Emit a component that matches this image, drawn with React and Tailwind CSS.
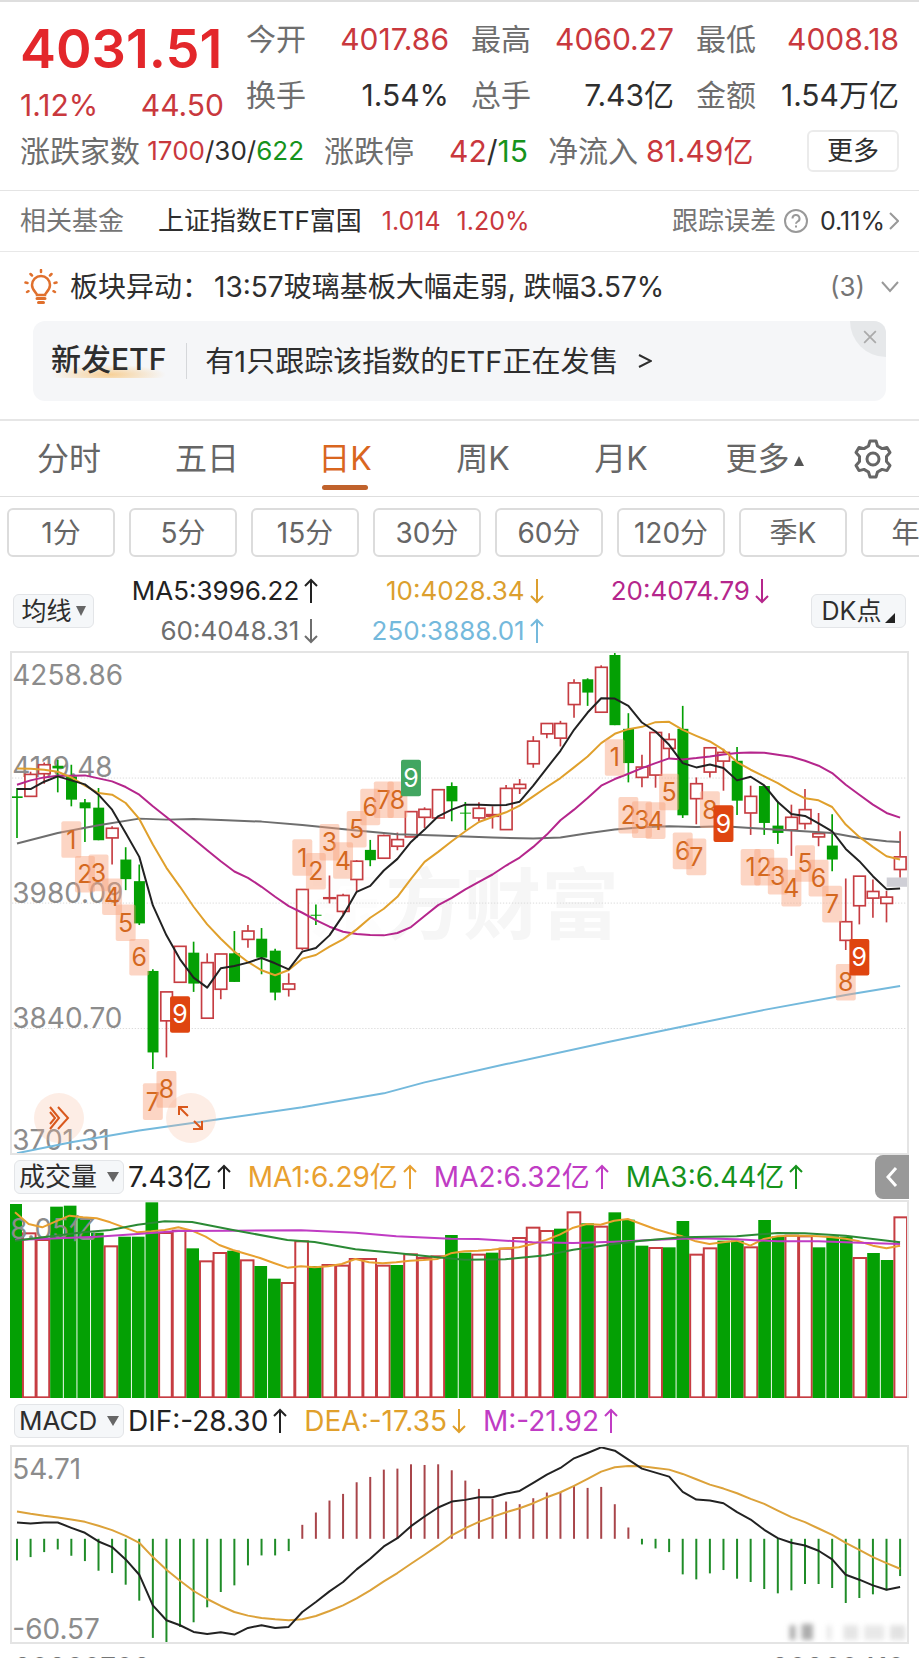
import React from 'react';

// Chart space: 3 units per pixel, one trading day every STEP units
const STEP = 40.85;
const CHART_W = 2691;
const dayX = (i) => 15 + i * STEP;

const RED = '#c63d42';
const GREEN = '#04a004';

// [day type, body top, body bottom, high, low]
const CANDLES = [
  ['g', 440, 445, 415, 565], ['r', 374, 440, 366, 440], ['r', 345, 372, 338, 402], ['g', 348, 356, 330, 428],
  ['g', 380, 450, 345, 470], ['g', 458, 476, 448, 577], ['g', 474, 572, 415, 572], ['r', 536, 565, 530, 645],
  ['g', 630, 689, 593, 722], ['g', 695, 822, 645, 827], ['g', 965, 1210, 960, 1260], ['r', 1028, 1115, 1028, 1225],
  ['r', 891, 999, 891, 999], ['g', 910, 1003, 877, 1028], ['r', 940, 1107, 912, 1107], ['r', 914, 1020, 914, 1050],
  ['g', 912, 998, 845, 998], ['r', 845, 870, 827, 895], ['g', 868, 925, 836, 975], ['g', 904, 1030, 898, 1053],
  ['r', 1004, 1020, 972, 1042], ['r', 720, 897, 720, 903], ['g', 796, 799, 765, 827], ['r', 745, 747, 678, 762],
  ['r', 738, 786, 733, 795], ['r', 635, 690, 632, 725], ['g', 601, 632, 571, 650], ['r', 558, 626, 555, 626],
  ['r', 570, 590, 549, 602], ['r', 486, 562, 486, 562], ['r', 479, 503, 473, 535], ['r', 420, 505, 420, 505],
  ['g', 409, 455, 398, 515], ['g', 489, 492, 457, 542], ['r', 476, 505, 458, 515], ['r', 495, 500, 470, 537],
  ['r', 416, 540, 406, 540], ['r', 404, 416, 388, 433], ['r', 274, 342, 259, 354], ['r', 221, 252, 221, 265],
  ['r', 221, 265, 213, 290], ['r', 99, 164, 88, 204], ['g', 88, 128, 85, 168], ['r', 52, 187, 46, 187],
  ['g', 15, 226, 9, 226], ['g', 237, 340, 190, 398], ['r', 352, 383, 315, 413], ['r', 248, 376, 248, 414],
  ['r', 269, 296, 250, 325], ['g', 237, 497, 168, 505], ['r', 402, 447, 383, 524], ['r', 294, 367, 294, 383],
  ['r', 308, 334, 297, 423], ['g', 333, 453, 292, 496], ['r', 440, 490, 408, 556], ['g', 409, 520, 409, 556],
  ['g', 528, 550, 455, 583], ['r', 503, 541, 465, 619], ['r', 480, 522, 418, 540], ['r', 552, 562, 490, 590],
  ['g', 588, 630, 494, 665], ['r', 817, 873, 687, 902], ['r', 680, 769, 680, 825], ['r', 726, 746, 690, 805],
  ['r', 743, 762, 724, 819], ['r', 622, 660, 545, 685],
];

const MA5 = [
  418, 418, 396, 380, 392, 404, 435, 480, 550, 622, 768, 858, 930, 985, 1015, 957, 950, 940, 926, 942, 960, 907,
  896, 858, 798, 727, 709, 663, 628, 577, 540, 500, 480, 465, 465, 467, 466, 456, 408, 355, 303, 240, 188, 145,
  146, 168, 218, 245, 285, 340, 353, 344, 355, 392, 381, 407, 457, 493, 499, 521, 545, 598, 635, 680, 719, 717,
];
const MA10 = [
  356, 357, 360, 366, 383, 408, 430, 435, 460, 508, 585, 655, 712, 772, 825, 868, 907, 938, 963, 978, 962, 928,
  917, 892, 870, 840, 805, 778, 742, 688, 637, 607, 575, 545, 517, 502, 488, 468, 440, 412, 385, 353, 320, 280,
  252, 238, 231, 217, 216, 240, 258, 275, 300, 337, 360, 380, 400, 425, 446, 452, 472, 525, 562, 592, 620, 630,
];
const MA20 = [
  405, 392, 383, 378, 378, 377, 386, 395, 412, 435, 470, 502, 535, 568, 602, 635, 666, 685, 712, 742, 770, 790,
  812, 832, 847, 854, 857, 858, 851, 833, 800, 767, 745, 720, 697, 675, 648, 624, 592, 555, 512, 480, 445, 408,
  388, 372, 355, 340, 326, 329, 325, 320, 314, 310, 308, 309, 315, 321, 333, 348, 370, 405, 435, 465, 490, 504,
];
// [day, y] pairs for the slow averages
const MA60 = [
  [0, 582], [3, 550], [6, 527], [9, 507], [11, 510], [13, 508], [15, 511], [18, 516], [21, 526], [25, 543],
  [28, 554], [31, 558], [35, 564], [38, 567], [40, 564], [42, 551], [44, 540], [46, 533], [48, 530], [50, 532],
  [52, 530], [54, 535], [57, 543], [60, 550], [62, 565], [64, 575], [65, 577],
];
const MA250 = [
  [0, 1513], [4, 1480], [9, 1445], [21, 1375], [27, 1333], [30, 1300], [36, 1245], [43.6, 1178], [49, 1132],
  [55, 1082], [61, 1037], [65, 1010],
];

// [label, day, centre y, style]
const TAGS = [
  ['1', 4, 570], ['2', 5, 674], ['3', 6, 670], ['4', 7, 742], ['5', 8, 820], ['6', 9, 924], ['7', 10, 1358],
  ['8', 11, 1321], ['9', 12, 1096, 'hot'],
  ['1', 21, 624], ['2', 22, 665], ['3', 23, 578], ['4', 24, 633], ['5', 25, 539], ['6', 26, 472], ['7', 27, 450],
  ['8', 28, 450], ['9', 29, 385, 'cool'],
  ['1', 44, 323], ['2', 45, 497], ['3', 46, 510], ['4', 47, 513], ['5', 48, 427], ['6', 49, 604], ['7', 50, 622],
  ['8', 51, 480], ['9', 52, 522, 'hot'],
  ['1', 54, 653], ['2', 55, 653], ['3', 56, 680], ['4', 57, 716], ['5', 58, 642], ['6', 59, 686], ['7', 60, 764],
  ['8', 61, 999], ['9', 62, 924, 'hot'],
];

const VOLUME_TYPES = 'grrggggrgggrrgrrgrggrrgrrrrrgrrrggrgrrrrgrgrgggrggrrggrggrrgggrggr';
const VOLUME_TOPS = [
  160, 248, 268, 168, 165, 203, 246, 287, 258, 258, 155, 247, 240, 293, 332, 307, 300, 329, 346, 384, 397, 272,
  346, 343, 345, 325, 325, 345, 343, 311, 322, 317, 253, 306, 312, 306, 294, 262, 231, 241, 234, 185, 218, 228,
  185, 207, 285, 292, 290, 211, 312, 293, 270, 270, 290, 208, 257, 255, 257, 290, 257, 258, 322, 307, 328, 200,
];
const VOLUME_MA1 = [
  185, 220, 230, 212, 195, 200, 203, 215, 230, 245, 242, 238, 230, 240, 258, 283, 298, 310, 322, 337, 351, 347,
  350, 347, 340, 325, 335, 338, 335, 330, 328, 325, 308, 302, 300, 297, 293, 290, 280, 268, 252, 231, 220, 222,
  210, 205, 220, 235, 247, 257, 272, 280, 275, 270, 285, 265, 257, 255, 255, 257, 260, 264, 272, 285, 293, 285,
];
const VOLUME_MA2 = [
  [0, 268], [6, 258], [9, 250], [12, 241], [16, 240], [21, 239], [25, 246], [28, 257], [32, 264], [34, 265],
  [38, 275], [41, 277], [44, 273], [48, 266], [50, 263], [53, 266], [56, 272], [59, 272], [62, 276], [65, 280],
];
const VOLUME_MA3 = [
  [0, 270], [5, 245], [7, 238], [9, 222], [11, 212], [13, 214], [16, 238], [20, 268], [22, 274], [25, 296],
  [28, 307], [31, 320], [33, 327], [36, 326], [39, 314], [41, 297], [44, 280], [46, 270], [49, 260], [53, 257],
  [56, 247], [58, 248], [61, 255], [65, 275],
];

const MACD_BARS = [
  495, 485, 470, 462, 481, 497, 526, 533, 568, 616, 728, 741, 695, 681, 636, 590, 570, 510, 480, 480, 467, 388,
  351, 315, 295, 260, 244, 222, 219, 206, 208, 206, 224, 255, 280, 310, 318, 326, 308, 291, 291, 270, 277, 274,
  326, 396, 447, 459, 470, 537, 552, 534, 524, 550, 560, 581, 594, 585, 566, 566, 578, 623, 608, 597, 585, 542,
];
const DIF = [
  381, 384, 381, 381, 397, 412, 438, 455, 492, 538, 630, 675, 690, 710, 716, 711, 718, 698, 690, 698, 695, 650,
  620, 588, 560, 522, 490, 453, 428, 392, 363, 336, 318, 313, 305, 305, 294, 286, 262, 237, 217, 188, 172, 155,
  165, 192, 219, 231, 243, 289, 312, 315, 323, 350, 372, 403, 428, 442, 450, 466, 492, 538, 553, 570, 583, 575,
];
const DEA = [
  348, 355, 361, 366, 372, 379, 391, 404, 421, 442, 485, 523, 556, 587, 611, 632, 650, 661, 668, 672, 675, 672,
  662, 647, 630, 609, 585, 558, 533, 505, 478, 450, 420, 398, 379, 364, 350, 338, 323, 305, 290, 271, 250, 228,
  215, 211, 212, 217, 222, 235, 251, 267, 279, 293, 310, 325, 345, 365, 380, 399, 418, 442, 463, 485, 503, 520,
];

function Line({ data, color, width = 6 }) {
  const points = data
    .map((d, i) => (Array.isArray(d) ? `${dayX(d[0])},${d[1]}` : `${dayX(i)},${d}`))
    .join(' ');
  return <polyline points={points} fill="none" stroke={color} strokeWidth={width} strokeLinejoin="round" />;
}

function Candle({ index, type, top, bottom, high, low }) {
  const x = dayX(index);
  if (type === 'g') {
    return (
      <g>
        <line x1={x} x2={x} y1={high} y2={low} stroke={GREEN} strokeWidth="5" />
        <rect x={x - 16} y={top} width="33" height={bottom - top} fill={GREEN} />
      </g>
    );
  }
  return (
    <g stroke={RED} strokeWidth="5">
      <line x1={x} x2={x} y1={high} y2={low} />
      <rect x={x - 17} y={top} width="35" height={bottom - top} fill="#fff" />
    </g>
  );
}

function Tag({ label, index, y, kind }) {
  const x = dayX(index);
  const fill = kind === 'hot' ? '#df4510' : kind === 'cool' ? '#42a661' : '#f9a27c';
  return (
    <g>
      <rect x={x - 30} y={y - 55} width="60" height="110" rx="6" fill={fill} fillOpacity={kind ? 1 : 0.45} />
      <text x={x} y={y + 27} fontSize="75" textAnchor="middle" fill={kind ? '#fff' : '#d4681f'}>
        {label}
      </text>
    </g>
  );
}

function PriceChart() {
  return (
    <div className="relative border-2 border-[#e4e4e4]">
      <svg viewBox={`0 9 ${CHART_W} 1503`} className="block w-full h-auto" role="img" aria-label="日K">
        <text x="1825" y="850" fontSize="234" fontWeight="bold" textAnchor="end" fill="#f6f6f6">
          <tspan fill="#fdfdfd">东</tspan>方财富
        </text>
        {[385, 761, 1138].map((y) => (
          <line key={y} x1="0" x2={CHART_W} y1={y} y2={y} stroke="#dcdcdc" strokeWidth="3" strokeDasharray="4 5" />
        ))}
        <g fontSize="84" fill="#8c8c8c">
          <text x="1" y="105">4258.86</text>
          <text x="1" y="382">4119.48</text>
          <text x="1" y="762">3980.09</text>
          <text x="1" y="1138">3840.70</text>
          <text x="1" y="1503">3701.31</text>
        </g>
        {CANDLES.map(([type, top, bottom, high, low], i) => (
          <Candle key={i} index={i} type={type} top={top} bottom={bottom} high={high} low={low} />
        ))}
        <Line data={MA250} color="#74b9dc" />
        <Line data={MA60} color="#6e6e6e" />
        <Line data={MA20} color="#b5268c" />
        <Line data={MA10} color="#e0a02c" />
        <Line data={MA5} color="#222" />
        {TAGS.map(([label, index, y, kind], i) => (
          <Tag key={i} label={label} index={index} y={y} kind={kind} />
        ))}
        <rect x="2630" y="684" width="61" height="28" fill="#cfcfd6" />
      </svg>
      <button
        aria-label="快进"
        className="absolute left-[22px] bottom-[10px] w-[50px] h-[50px] rounded-full bg-[#f9b798]/25 flex items-center justify-center"
      >
        <svg viewBox="0 0 24 26" className="w-6 h-[26px]" fill="none" stroke="#d9581c" strokeWidth="2">
          <path d="M3 2l9 11-9 11M3 7l5 6-5 6M11 2l10 11-10 11" />
        </svg>
      </button>
      <button
        aria-label="全屏"
        className="absolute left-[154px] bottom-[10px] w-[50px] h-[50px] rounded-full bg-[#f9b798]/25 flex items-center justify-center"
      >
        <svg viewBox="0 0 26 26" className="w-[26px] h-[26px]" fill="none" stroke="#d9581c" strokeWidth="2">
          <path d="M1 10V2h9M1 2l9 9M24 16v8h-9M24 24l-8-8" />
        </svg>
      </button>
    </div>
  );
}

function VolumeChart() {
  return (
    <div className="border-t-2 border-r-2 border-[#e4e4e4]">
      <svg viewBox={`0 154 ${CHART_W} 588`} className="block w-full h-auto" role="img" aria-label="成交量">
        {VOLUME_TOPS.map((top, i) =>
          VOLUME_TYPES[i] === 'g' ? (
            <rect key={i} x={dayX(i) - 17} y={top} width="38" height={742 - top} fill={GREEN} />
          ) : (
            <rect key={i} x={dayX(i) - 17} y={top} width="38" height={740 - top} fill="#fff" stroke={RED} strokeWidth="6" />
          )
        )}
        <text x="1" y="264" fontSize="84" fill="#8c8c8c">8.05亿</text>
        <Line data={VOLUME_MA1} color="#e8a030" />
        <Line data={VOLUME_MA2} color="#c03cc4" />
        <Line data={VOLUME_MA3} color="#2b8a35" />
      </svg>
    </div>
  );
}

function MacdChart() {
  return (
    <div className="border-2 border-[#e4e4e4]">
      <svg viewBox={`0 154 ${CHART_W} 588`} className="block w-full h-auto" role="img" aria-label="MACD">
        <g fontSize="84" fill="#8c8c8c">
          <text x="1" y="249">54.71</text>
          <text x="1" y="731">-60.57</text>
        </g>
        {MACD_BARS.map((y, i) => (
          <line
            key={i}
            x1={dayX(i)}
            x2={dayX(i)}
            y1="430"
            y2={y}
            stroke={y < 430 ? '#a8454a' : '#1f8c28'}
            strokeWidth="6"
          />
        ))}
        <Line data={DEA} color="#dca23a" />
        <Line data={DIF} color="#222" />
        <g fill="#8a8a8a" className="blur-[8px]">
          <rect x="2338" y="690" width="18" height="44" fillOpacity="0.7" />
          <rect x="2374" y="686" width="34" height="48" fillOpacity="0.7" />
          <rect x="2450" y="690" width="14" height="44" fillOpacity="0.2" />
          <rect x="2500" y="690" width="44" height="44" fillOpacity="0.22" />
          <rect x="2562" y="690" width="60" height="44" fillOpacity="0.2" />
          <rect x="2640" y="690" width="46" height="44" fillOpacity="0.25" />
        </g>
      </svg>
    </div>
  );
}

function Quote({ label, value, className = 'text-[#2e2e2e]' }) {
  return (
    <div className="flex items-center justify-between h-[56px]">
      <span className="text-[#6e6e6e]">{label}</span>
      <span className={className}>{value}</span>
    </div>
  );
}

// Thin arrow that follows an indicator value
function Trend({ down = false }) {
  return (
    <svg
      viewBox="0 0 16 26"
      className={`inline-block w-4 h-[26px] ml-1 shrink-0 ${down ? 'rotate-180' : ''}`}
      fill="none"
      stroke="currentColor"
      strokeWidth="2"
    >
      <path d="M8 25V2M2 8l6-6 6 6" />
    </svg>
  );
}

function Indicator({ text, down, className = '' }) {
  return (
    <span className={`flex items-center whitespace-nowrap ${className}`}>
      {text}
      <Trend down={down} />
    </span>
  );
}

function PickerButton({ label }) {
  return (
    <button className="flex items-center justify-between w-[110px] h-[34px] px-1 text-[26px] text-[#2e2e2e] bg-[#f5f7f9] border border-[#e3e5e8] rounded-md">
      {label}
      <svg viewBox="0 0 12 10" className="w-3 h-[10px]" fill="#666">
        <path d="M0 0h12L6 10z" />
      </svg>
    </button>
  );
}

const TABS = ['分时', '五日', '日K', '周K', '月K'];
const PERIODS = ['1分', '5分', '15分', '30分', '60分', '120分', '季K', '年K'];

export default function App() {
  return (
    <div className="h-screen overflow-hidden bg-white text-[28px] leading-none font-['Inter','Noto_Sans_CJK_SC',sans-serif]">
      <header className="border-t-2 border-[#dedede] border-b border-b-[#e4e4e4] px-5 pt-[9px] pb-[11px] text-[30px]">
        <div className="grid grid-cols-[204px_1fr_1fr_1fr] gap-x-[22px]">
          <div>
            <div className="h-[76px] flex items-center text-[54px] font-semibold text-[#e3272b]">4031.51</div>
            <div className="h-[36px] flex items-center justify-between text-[#c9383d]">
              <span>1.12%</span>
              <span>44.50</span>
            </div>
          </div>
          <div>
            <Quote label="今开" value="4017.86" className="text-[#c9383d]" />
            <Quote label="换手" value="1.54%" />
          </div>
          <div>
            <Quote label="最高" value="4060.27" className="text-[#c9383d]" />
            <Quote label="总手" value="7.43亿" />
          </div>
          <div>
            <Quote label="最低" value="4008.18" className="text-[#c9383d]" />
            <Quote label="金额" value="1.54万亿" />
          </div>
        </div>
        <div className="flex items-center gap-5 h-[56px] whitespace-nowrap text-[#6e6e6e]">
          <div className="w-[284px] flex items-center justify-between">
            <span>涨跌家数</span>
            <span className="text-[26px] text-[#2e2e2e]">
              <span className="text-[#c9383d]">1700</span>/30/<span className="text-[#16931c]">622</span>
            </span>
          </div>
          <div className="w-[204px] flex items-center justify-between">
            <span>涨跌停</span>
            <span className="text-[#2e2e2e]">
              <span className="text-[#c9383d]">42</span>/<span className="text-[#16931c]">15</span>
            </span>
          </div>
          <div className="flex items-center gap-2">
            <span>净流入</span>
            <span className="text-[#c9383d]">81.49亿</span>
          </div>
          <button className="ml-auto w-[92px] h-[42px] text-[26px] text-[#2e2e2e] border-2 border-[#ebebeb] rounded-md">
            更多
          </button>
        </div>
      </header>

      <a href="#fund" className="flex items-center h-[61px] px-5 border-b border-[#e8e8e8] text-[26px] whitespace-nowrap text-[#2e2e2e]">
        <span className="text-[#757575]">相关基金</span>
        <span className="ml-[34px]">上证指数ETF富国</span>
        <span className="ml-5 text-[25px] text-[#c9383d]">1.014</span>
        <span className="ml-4 text-[25px] text-[#c9383d]">1.20%</span>
        <span className="ml-auto text-[#757575]">跟踪误差</span>
        <svg viewBox="0 0 24 24" className="w-6 h-6 ml-2 mr-3" fill="none" stroke="#999" strokeWidth="2">
          <circle cx="12" cy="12" r="11" />
          <path d="M8.500 9.500a3.500 3.500 0 1 1 5.200 3c-1.200.8-1.700 1.200-1.700 2.300M12 16.500v2" />
        </svg>
        <span className="text-[25px]">0.11%</span>
        <svg viewBox="0 0 10 18" className="w-[10px] h-[18px] ml-1" fill="none" stroke="#999" strokeWidth="2">
          <path d="M1 1l8 8-8 8" />
        </svg>
      </a>

      <div className="flex items-center h-[69px] pl-6 pr-5 text-[#2e2e2e] whitespace-nowrap">
        <svg viewBox="0 0 34 36" className="w-[34px] h-9 mr-3" fill="none" stroke="#e0702d" strokeWidth="2.500" strokeLinecap="round">
          <path d="M13 26c0-2-5-4.500-5-10a9 9 0 0 1 18 0c0 5.500-5 8-5 10z" />
          <path d="M13 29.500h8M14.500 33.500h5" strokeWidth="3" />
          <path d="M17 1v2M6.500 5l1.500 1.500M27.500 5L26 6.500M1.500 13.500l2 .5M32.500 13.500l-2 .5M3 23l1.500-.8M31 23l-1.500-.8" />
        </svg>
        <span>板块异动：</span>
        <span className="ml-1">13:57玻璃基板大幅走弱, 跌幅3.57%</span>
        <span className="ml-auto text-[26px] text-[#757575]">(3)</span>
        <svg viewBox="0 0 18 12" className="w-[18px] h-3 ml-4" fill="none" stroke="#999" strokeWidth="2">
          <path d="M1 1l8 9 8-9" />
        </svg>
      </div>

      <div className="relative mx-[33px] mb-[18px] h-[80px] flex items-center bg-[#f5f6f8] rounded-xl overflow-hidden text-[#2e2e2e] whitespace-nowrap">
        <div className="ml-[18px] text-[30px] font-medium pb-1 bg-[radial-gradient(ellipse_50%_30%_at_50%_90%,#f7cf95,transparent)]">新发ETF</div>
        <div className="ml-5 mr-[18px] w-px h-9 bg-[#d5d7da]" />
        <a href="#etf" className="text-[29px]">有1只跟踪该指数的ETF正在发售</a>
        <svg viewBox="0 0 14 14" className="w-[14px] h-[14px] ml-5" fill="none" stroke="#2e2e2e" strokeWidth="2">
          <path d="M1 1l12 6-12 6" />
        </svg>
        <button
          aria-label="关闭"
          className="absolute right-0 top-0 w-9 h-9 pl-1 pb-1 rounded-bl-full bg-[#e6e8ea] flex items-center justify-center"
        >
          <svg viewBox="0 0 12 12" className="w-[14px] h-[14px]" fill="none" stroke="#aaa" strokeWidth="1.500">
            <path d="M1 1l10 10M11 1L1 11" />
          </svg>
        </button>
      </div>

      <nav className="grid grid-cols-[repeat(5,138px)_1fr_92px] h-[78px] border-t-2 border-b border-t-[#e6e6e6] border-b-[#dedede] text-[32px] text-[#666]">
        {TABS.map((tab) => (
          <button
            key={tab}
            className={`relative h-full ${tab === '日K' ? 'text-[#d9661f]' : ''}`}
          >
            {tab}
            {tab === '日K' && (
              <span className="absolute left-1/2 -translate-x-1/2 bottom-[6px] w-[46px] h-[5px] rounded-full bg-[#c0622c]" />
            )}
          </button>
        ))}
        <button className="flex items-center justify-center gap-1 pl-3">
          更多
          <svg viewBox="0 0 10 10" className="w-[10px] h-[10px] mt-1" fill="#555">
            <path d="M5 0l5 10H0z" />
          </svg>
        </button>
        <button aria-label="设置" className="flex items-center justify-center">
          <svg viewBox="0 0 40 40" className="w-10 h-10" fill="none" stroke="#666" strokeWidth="3" strokeLinejoin="round">
            <path d="M17 2h6l1.500 5 4.500 2.600 5-1.200 3 5.200-3.500 3.800v5.200l3.500 3.800-3 5.200-5-1.200-4.500 2.600L23 38h-6l-1.500-5-4.500-2.600-5 1.200-3-5.200 3.500-3.800v-5.200L3 13.600l3-5.200 5 1.200L15.500 7z" />
            <circle cx="20" cy="20" r="6" />
          </svg>
        </button>
      </nav>

      <div className="flex gap-[14px] mt-[11px] pl-[7px] overflow-hidden">
        {PERIODS.map((period) => (
          <button key={period} className="shrink-0 w-[108px] h-[49px] text-[#666] border-2 border-[#dcdcdc] rounded-md">
            {period}
          </button>
        ))}
      </div>

      <div className="flex items-center mt-[14px] px-[13px] text-[25px]">
        <button className="flex items-center justify-center gap-1 w-[81px] h-[34px] text-[#2e2e2e] bg-[#f5f7f9] border border-[#e3e5e8] rounded-md whitespace-nowrap">
          均线
          <svg viewBox="0 0 10 10" className="w-[10px] h-[10px]" fill="#666">
            <path d="M0 0h10L5 10z" />
          </svg>
        </button>
        <div className="flex-1 grid grid-cols-3 auto-rows-[40px] justify-items-end text-[26px]">
          <Indicator text="MA5:3996.22" className="text-[#222]" />
          <Indicator text="10:4028.34" down className="text-[#dc9f2e]" />
          <Indicator text="20:4074.79" down className="text-[#b5268c]" />
          <Indicator text="60:4048.31" down className="text-[#6e6e6e]" />
          <Indicator text="250:3888.01" className="text-[#74b9dc]" />
        </div>
        <button className="flex items-center justify-center gap-1 ml-[41px] w-[95px] h-[34px] text-[#2e2e2e] bg-[#f5f7f9] border border-[#e3e5e8] rounded-md whitespace-nowrap">
          DK点
          <svg viewBox="0 0 8 8" className="w-[10px] h-[10px] self-end mb-1" fill="#222">
            <path d="M8 0v8H0z" />
          </svg>
        </button>
      </div>

      <main className="px-[10px]">
        <PriceChart />
        <div className="flex items-center h-[45px] pl-1">
          <PickerButton label="成交量" />
          <Indicator text="7.43亿" className="ml-1 text-[#222]" />
          <Indicator text="MA1:6.29亿" className="ml-4 text-[#e8a030]" />
          <Indicator text="MA2:6.32亿" className="ml-4 text-[#c03cc4]" />
          <Indicator text="MA3:6.44亿" className="ml-4 text-[#16931c]" />
          <button aria-label="展开" className="ml-auto w-[34px] h-[44px] rounded-l-lg bg-[#999] flex items-center justify-center">
            <svg viewBox="0 0 12 20" className="w-3 h-5" fill="none" stroke="#fff" strokeWidth="3">
              <path d="M10 1l-8 9 8 9" />
            </svg>
          </button>
        </div>
        <VolumeChart />
        <div className="flex items-center h-[47px] pl-1">
          <PickerButton label="MACD" />
          <Indicator text="DIF:-28.30" className="ml-1 text-[#222]" />
          <Indicator text="DEA:-17.35" down className="ml-4 text-[#e0a02c]" />
          <Indicator text="M:-21.92" className="ml-4 text-[#c03cc4]" />
        </div>
        <MacdChart />
        <div className="flex justify-between mt-[10px] px-1 text-[#757575]">
          <span>20260708</span>
          <span>20260410</span>
        </div>
      </main>
    </div>
  );
}
